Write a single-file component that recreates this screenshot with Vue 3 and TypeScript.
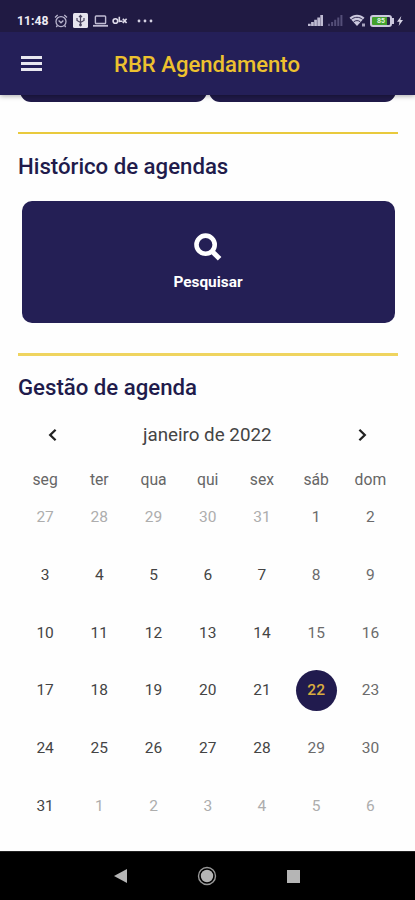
<script setup lang="ts">
interface Day {
  label: number
  outside: boolean
  selected: boolean
}

const weekdays: string[] = ['seg', 'ter', 'qua', 'qui', 'sex', 'sáb', 'dom']
const first = new Date(2021, 11, 27)

const days: Day[] = Array.from({ length: 42 }, (_, i) => {
  const date = new Date(first.getFullYear(), first.getMonth(), first.getDate() + i)
  const outside = date.getMonth() !== 0
  return { label: date.getDate(), outside, selected: !outside && date.getDate() === 22 }
})
</script>

<template>
  <div class="screen">
    <header class="top">
      <div class="status">
        <span class="clock">11:48</span>
        <svg class="alarm" width="14" height="14" viewBox="0 0 14 14" fill="none" stroke="#b9b5ce" stroke-width="1.3">
          <circle cx="7" cy="7.6" r="5" />
          <path d="M1 3.4 3.7 1M13 3.4 10.3 1M4.6 6.5 7 8.8l2.4-2.3M3.4 11.5 2.3 13M10.6 11.5l1.1 1.5" />
        </svg>
        <svg class="usb" width="15" height="15" viewBox="0 0 15 15">
          <rect width="15" height="15" rx="1.5" fill="#e6e4ee" />
          <path d="M7.5 3v9M4 5v2.5l3.5 2M11 5v2.5l-3.5 2M6 4.2 7.5 2.4 9 4.2" fill="none" stroke="#49435f" stroke-width="1.2" />
          <circle cx="7.5" cy="12" r="1.4" fill="#49435f" />
        </svg>
        <svg class="laptop" width="15" height="12" viewBox="0 0 15 12" fill="none" stroke="#c0bcd3" stroke-width="1.4">
          <rect x="2.4" y="1" width="10.2" height="7.5" rx="0.8" />
          <path d="M0 10.8h15" stroke-width="1.8" />
        </svg>
        <svg class="olx" width="16" height="9" viewBox="0 0 16 9" fill="none" stroke="#dedbea" stroke-width="1.6">
          <circle cx="3.4" cy="5" r="2.3" />
          <path d="M7.3 0.8v5.4M7.8 5.3h2.8M10.8 2.7l3.8 4.4M14.6 2.7l-3.8 4.4" />
        </svg>
        <svg class="dots" width="16" height="4" viewBox="0 0 16 4" fill="#d5d2e2">
          <circle cx="2" cy="2" r="1.4" /><circle cx="8" cy="2" r="1.4" /><circle cx="14" cy="2" r="1.4" />
        </svg>
        <span class="spring"></span>
        <svg class="signal" width="15" height="11" viewBox="0 0 15 11" fill="#bfbbd3">
          <path d="M0 8.8h2.7V11H0zM3.1 7h2.7v4H3.1zM6.2 4.8h2.7V11H6.2zM9.3 2.5H12V11H9.3zM12.3 0H15v11h-2.7z" />
        </svg>
        <svg class="signal" width="15" height="11" viewBox="0 0 15 11" fill="#544e78">
          <path d="M0 8.8h2V11H0zM3.1 7h2v4h-2zM6.2 4.8h2V11h-2zM9.3 2.5h2V11h-2zM12.4 0h2v11h-2z" />
        </svg>
        <svg class="wifi" width="17" height="13" viewBox="0 0 17 13">
          <path d="M0.5 3.7C4.8-.3 11.2-.3 15.5 3.7L8 12z" fill="#cbc8dd" />
          <path d="M2.4 5.4c3.2-2.8 8-2.8 11.2 0M4.7 7.8c2-1.6 4.6-1.6 6.6 0" fill="none" stroke="#201a43" stroke-width="0.9" />
          <path d="M13 9.5h3v3h-3z" fill="#a6a2bd" />
        </svg>
        <div class="battery"><span>85</span></div>
        <svg class="bolt" width="6" height="10" viewBox="0 0 6 10" fill="#d8d5e5"><path d="M4.3 0 0 5.7h2.5L1.7 10 6 4.1H3.4z" /></svg>
      </div>
      <div class="appbar">
        <svg class="menu" width="21" height="15" viewBox="0 0 21 15" fill="#e8e7ef">
          <path d="M0 0h21v3H0zM0 6h21v3H0zM0 12h21v3H0z" />
        </svg>
        <h1>RBR Agendamento</h1>
      </div>
    </header>

    <main>
      <div class="tiles"><i></i><i></i></div>
      <hr />
      <h2>Histórico de agendas</h2>
      <button class="search">
        <svg width="28" height="28" viewBox="0 0 28 28" fill="none" stroke="#fff">
          <circle cx="11.6" cy="11.7" r="9.1" stroke-width="4.6" />
          <path d="m18 18.2 7.6 7.6" stroke-width="5" />
        </svg>
        <span>Pesquisar</span>
      </button>
      <hr class="second" />
      <h2 class="manage">Gestão de agenda</h2>
      <div class="month">
        <svg width="9" height="14" viewBox="0 0 9 14" fill="none" stroke="#222" stroke-width="2.3"><path d="M7.6 1.7 2.2 7l5.4 5.3" /></svg>
        <span>janeiro de 2022</span>
        <svg width="9" height="14" viewBox="0 0 9 14" fill="none" stroke="#222" stroke-width="2.3"><path d="M1.4 1.7 6.8 7l-5.4 5.3" /></svg>
      </div>
      <div class="week">
        <span v-for="name in weekdays" :key="name">{{ name }}</span>
      </div>
      <div class="days">
        <span v-for="(day, i) in days" :key="i" :class="{ outside: day.outside, selected: day.selected, weekend: i % 7 > 4 }"><b>{{ day.label }}</b></span>
      </div>
    </main>

    <nav>
      <svg width="13" height="14" viewBox="0 0 13 14" fill="#b5b5b5"><path d="M13 0v14L0 7z" /></svg>
      <svg width="20" height="20" viewBox="0 0 20 20"><circle cx="10" cy="10" r="8.5" fill="none" stroke="#999" stroke-width="1.4" /><circle cx="10" cy="10" r="6.2" fill="#b5b5b5" /></svg>
      <svg width="13" height="13" viewBox="0 0 13 13" fill="#b5b5b5"><rect width="13" height="13" /></svg>
    </nav>
  </div>
</template>

<style>
body {
  background: #fff;
  overflow: hidden;
}
</style>

<style scoped>
.screen {
  width: 415px;
  height: 900px;
  display: flex;
  flex-direction: column;
  overflow: hidden;
  background: #fefefe;
  font-family: Roboto, sans-serif;
}
svg {
  display: block;
  flex: none;
}
.top {
  height: 95px;
  flex: none;
  background: #241f58;
  box-shadow: 0 1px 5px rgba(0, 0, 0, 0.35);
  z-index: 1;
}
.status {
  height: 32px;
  box-sizing: border-box;
  padding: 9px 12px 0 17px;
  display: flex;
  align-items: center;
  background: #201a43;
  color: #eeecf5;
}
.clock {
  width: 31px;
  font-size: 12.2px;
  font-weight: 700;
  line-height: 22px;
  white-space: nowrap;
}
.alarm { margin-left: 6px; }
.usb { margin-left: 5px; }
.laptop { margin-left: 5px; }
.olx { margin-left: 4px; }
.dots { margin-left: 9px; }
.spring { flex: 1; }
.signal { margin-right: 5px; }
.wifi { margin-left: 1px; }
.battery {
  position: relative;
  width: 22px;
  height: 12px;
  box-sizing: border-box;
  margin-left: 4px;
  border: 2px solid #cbc8dd;
  border-radius: 3px;
  background: linear-gradient(90deg, #43a12e 82%, #292247 82%);
  font-size: 7px;
  line-height: 8px;
  font-weight: 700;
  text-align: center;
  color: #e4f4e0;
}
.battery::after {
  content: '';
  position: absolute;
  right: -4px;
  top: 1px;
  width: 2px;
  height: 6px;
  background: #cbc8dd;
}
.bolt { margin-left: 5px; }
.appbar {
  height: 63px;
  display: flex;
  align-items: center;
  padding-left: 21px;
}
h1 {
  margin: 0 0 0 72px;
  font-size: 22.1px;
  font-weight: 500;
  line-height: 30px;
  color: #edc12f;
  white-space: nowrap;
}
main {
  flex: 1;
  min-height: 0;
  padding: 0 17.5px 0 18px;
}
.tiles {
  display: flex;
  gap: 2px;
  height: 21px;
  margin-top: -14px;
  padding: 0 1.5px 0 1.5px;
}
.tiles i {
  flex: 1;
  background: #201a49;
  border-radius: 0 0 11px 11px;
}
hr {
  height: 2px;
  margin: 30px 0 0;
  border: 0;
  background: #e9ca3d;
}
h2 {
  margin: 17px 0 0;
  font-size: 22.2px;
  font-weight: 500;
  line-height: 30px;
  color: #211b4b;
  white-space: nowrap;
}
.search {
  width: 373px;
  height: 122px;
  margin: 20px 0 0 3.5px;
  padding: 32px 0 0;
  display: flex;
  flex-direction: column;
  align-items: center;
  border: 0;
  border-radius: 10px;
  background: #241f55;
  color: #fff;
  font: 700 15.4px/20px Roboto, sans-serif;
}
.search span { margin-top: 11px; }
.second {
  height: 3px;
  margin-top: 29.5px;
  background: #efd45f;
}
.manage {
  margin-top: 16.5px;
}
.month {
  height: 30px;
  margin-top: 18px;
  padding: 0 31px 0 30px;
  display: flex;
  align-items: center;
  justify-content: space-between;
  font-size: 18.8px;
  color: #444;
}
.week,
.days {
  display: grid;
  grid-template-columns: repeat(7, 1fr);
  text-align: center;
}
.week {
  margin-top: 20px;
  line-height: 20px;
  font-size: 15.7px;
  color: #666;
}
.days {
  margin-top: -1.5px;
  grid-auto-rows: 57.7px;
}
.days span {
  display: flex;
  align-items: center;
  justify-content: center;
  font-size: 15.5px;
  color: #444;
}
.days b {
  font-weight: 400;
}
.days .weekend { color: #6b6b6b; }
.days .outside { color: #adadad; }
.days .selected b {
  width: 41px;
  height: 41px;
  border-radius: 50%;
  background: #211b4e;
  color: #d9ad3f;
  font-weight: 500;
  line-height: 41px;
  text-align: center;
}
nav {
  height: 49px;
  box-sizing: border-box;
  flex: none;
  border-top: 1px solid #222;
  background: #000;
  display: flex;
  align-items: center;
  justify-content: space-between;
  padding: 0 115px 0 114px;
  z-index: 1;
}
</style>
